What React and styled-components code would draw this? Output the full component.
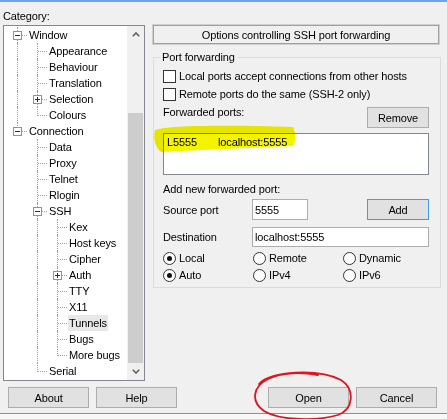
import React from "react";
import styled, { createGlobalStyle } from "styled-components";

const GlobalStyle = createGlobalStyle`
  html, body {
    margin: 0;
    padding: 0;
    background: #f0f0f0;
  }
  body {
    font-family: "Liberation Sans", Arial, sans-serif;
    font-size: 11px;
    letter-spacing: -0.12px;
    color: #000;
  }
  * {
    box-sizing: border-box;
  }
`;

const Dialog = styled.div`
  position: relative;
  width: 447px;
  height: 419px;
  background: #f0f0f0;
  display: flex;
  flex-direction: column;
  overflow: hidden;
`;

const TitleEdge = styled.div`
  height: 2px;
  flex-shrink: 0;
  background: #6ba4ec;
`;

const Main = styled.div`
  display: flex;
  gap: 8px;
  padding: 7px 0 0 3px;
`;

const LeftColumn = styled.div`
  width: 142px;
  display: flex;
  flex-direction: column;
  gap: 2px;
`;

const CategoryLabel = styled.div`
  height: 14px;
  line-height: 14px;
`;

const TreeBox = styled.div`
  height: 356px;
  display: flex;
  background: #fff;
  border: 1px solid #828790;
`;

const TreeList = styled.div`
  flex: 1;
  padding: 1px 0 0 3px;
  overflow: hidden;
`;

const TreeRow = styled.div`
  display: flex;
  height: 16px;
`;

const dots = "1px dotted #a0a0a0";

const Guide = styled.div`
  position: relative;
  width: 20px;
  flex-shrink: 0;

  &::before {
    content: "";
    position: absolute;
    left: 10px;
    top: 0;
    height: ${(p) => (p.$v === "full" ? "16px" : p.$v === "top" ? "9px" : "0")};
    border-left: ${(p) => (p.$v === "none" ? "none" : dots)};
  }

  &::after {
    content: "";
    position: absolute;
    left: 11px;
    top: 8px;
    width: ${(p) => (p.$h ? "9px" : "0")};
    border-top: ${(p) => (p.$h ? dots : "none")};
  }
`;

const Expander = styled.span`
  position: relative;
  z-index: 1;
  display: block;
  width: 9px;
  height: 9px;
  margin: 4px 0 0 6px;
  background: #fff;
  border: 1px solid #919191;

  &::before {
    content: "";
    position: absolute;
    left: 1px;
    top: 3px;
    width: 5px;
    height: 1px;
    background: #2b2b2b;
  }

  &::after {
    content: "";
    position: absolute;
    left: 3px;
    top: 1px;
    width: 1px;
    height: ${(p) => (p.$open ? "0" : "5px")};
    background: #2b2b2b;
  }
`;

const NodeLabel = styled.span`
  margin-left: 1px;
  padding: 0 1px;
  line-height: 16px;
  white-space: nowrap;
  background: ${(p) => (p.$selected ? "#e8e8e8" : "transparent")};
`;

const Scrollbar = styled.div`
  width: 17px;
  flex-shrink: 0;
  display: flex;
  flex-direction: column;
  background: #f0f0f0;
`;

const ScrollArrow = styled.div`
  height: 17px;
  display: flex;
  align-items: center;
  justify-content: center;
  color: #606060;
`;

const ScrollTrack = styled.div`
  flex: 1;
  display: flex;
  flex-direction: column;
  justify-content: flex-end;
`;

const ScrollThumb = styled.div`
  height: 250px;
  margin: 0 1px;
  background: #cdcdcd;
`;

const RightColumn = styled.div`
  width: 288px;
  margin-top: 16px;
  display: flex;
  flex-direction: column;
`;

const PanelTitle = styled.div`
  height: 19px;
  display: flex;
  align-items: center;
  justify-content: center;
  border: 1px solid #a0a0a0;
  box-shadow: 0 0 0 1px #d0d0d0;
  margin-right: 2px;
`;

const GroupBox = styled.fieldset`
  margin: 6px 0 0 0;
  padding: 0 11px 4px 9px;
  min-width: 0;
  border: 1px solid #dcdcdc;
`;

const GroupLegend = styled.legend`
  margin-left: -3px;
  padding: 0 2px;
  line-height: 14px;
`;

const CheckRow = styled.label`
  display: flex;
  align-items: center;
  gap: 3px;
  height: 16px;
  margin-top: ${(p) => p.$mt}px;
`;

const CheckBox = styled.span`
  width: 13px;
  height: 13px;
  flex-shrink: 0;
  background: #fff;
  border: 1px solid #333;
`;

const SplitRow = styled.div`
  display: flex;
  justify-content: space-between;
  align-items: flex-start;
  margin-top: 3px;
`;

const PlainLabel = styled.div`
  line-height: ${(p) => p.$lh || 14}px;
  margin-top: ${(p) => p.$mt || 0}px;
`;

const Button = styled.button`
  width: ${(p) => p.$w || 81}px;
  height: 21px;
  margin-top: ${(p) => p.$mt || 0}px;
  padding: 0;
  font: inherit;
  letter-spacing: inherit;
  color: #000;
  background: #e1e1e1;
  border: 1px solid ${(p) => (p.$focused ? "#3c9cf0" : "#adadad")};
  flex-shrink: 0;
`;

const ListBox = styled.div`
  height: 42px;
  margin-top: 5px;
  padding: 0 3px;
  background: #fff;
  border: 1px solid #828790;
`;

const ListItem = styled.div`
  display: flex;
  line-height: 14px;
  padding-top: 1px;
`;

const ListCell = styled.span`
  width: ${(p) => p.$w}px;
  white-space: nowrap;
`;

const FieldRow = styled.div`
  display: flex;
  align-items: center;
  height: ${(p) => p.$h}px;
  margin-top: ${(p) => p.$mt}px;
`;

const FieldLabel = styled.span`
  width: 89px;
  flex-shrink: 0;
`;

const TextInput = styled.div`
  width: ${(p) => (p.$w ? `${p.$w}px` : "auto")};
  flex: ${(p) => (p.$w ? "none" : "1")};
  height: 100%;
  display: flex;
  align-items: center;
  padding-left: 2px;
  background: #fff;
  border: 1px solid #abadb3;
`;

const AddButton = styled(Button)`
  margin-left: auto;
  align-self: flex-end;
`;

const RadioGrid = styled.div`
  display: grid;
  grid-template-columns: 90px 90px 1fr;
  grid-auto-rows: 16px;
  row-gap: 1px;
  margin-top: 3px;
`;

const RadioOption = styled.label`
  display: flex;
  align-items: center;
  gap: 3px;
`;

const RadioDot = styled.span`
  width: 13px;
  height: 13px;
  flex-shrink: 0;
  border-radius: 50%;
  background: #fff;
  border: 1px solid #333;
  display: flex;
  align-items: center;
  justify-content: center;

  &::after {
    content: "";
    width: 5px;
    height: 5px;
    border-radius: 50%;
    background: ${(p) => (p.$on ? "#111" : "transparent")};
  }
`;

const Footer = styled.div`
  display: flex;
  gap: 7px;
  padding: 6px 10px 0 8px;
`;

const Spacer = styled.div`
  flex: 1;
`;

const BottomEdge = styled.div`
  margin-top: auto;
  height: 6px;
  border-top: 1px solid #5a9be0;
  background: #f8f8f8;
`;

const Annotations = styled.svg`
  position: absolute;
  left: 0;
  top: 0;
  width: 447px;
  height: 419px;
  pointer-events: none;
`;

const Highlighter = styled.path`
  fill: #f4f400;
  mix-blend-mode: multiply;
`;

const PenCircle = styled.path`
  fill: none;
  stroke: #e0141e;
  stroke-width: 1.8;
  stroke-linecap: round;
`;

const treeRows = [
  { label: "Window", guides: [], v: "full", exp: "open" },
  { label: "Appearance", guides: ["full"], v: "full" },
  { label: "Behaviour", guides: ["full"], v: "full" },
  { label: "Translation", guides: ["full"], v: "full" },
  { label: "Selection", guides: ["full"], v: "full", exp: "closed" },
  { label: "Colours", guides: ["full"], v: "top" },
  { label: "Connection", guides: [], v: "top", exp: "open" },
  { label: "Data", guides: ["none"], v: "full" },
  { label: "Proxy", guides: ["none"], v: "full" },
  { label: "Telnet", guides: ["none"], v: "full" },
  { label: "Rlogin", guides: ["none"], v: "full" },
  { label: "SSH", guides: ["none"], v: "full", exp: "open" },
  { label: "Kex", guides: ["none", "full"], v: "full" },
  { label: "Host keys", guides: ["none", "full"], v: "full" },
  { label: "Cipher", guides: ["none", "full"], v: "full" },
  { label: "Auth", guides: ["none", "full"], v: "full", exp: "closed" },
  { label: "TTY", guides: ["none", "full"], v: "full" },
  { label: "X11", guides: ["none", "full"], v: "full" },
  { label: "Tunnels", guides: ["none", "full"], v: "full", selected: true },
  { label: "Bugs", guides: ["none", "full"], v: "full" },
  { label: "More bugs", guides: ["none", "full"], v: "top" },
  { label: "Serial", guides: ["none"], v: "top" },
];

const Chevron = ({ up }) => (
  <svg width="8" height="5" viewBox="0 0 8 5">
    <polyline
      points={up ? "0.8,4.2 4,1 7.2,4.2" : "0.8,0.8 4,4 7.2,0.8"}
      fill="none"
      stroke="currentColor"
      strokeWidth="1.6"
    />
  </svg>
);

const Radio = ({ on, children }) => (
  <RadioOption>
    <RadioDot $on={on} />
    {children}
  </RadioOption>
);

export default function App() {
  return (
    <>
      <GlobalStyle />
      <Dialog>
        <TitleEdge />
        <Main>
          <LeftColumn>
            <CategoryLabel>Category:</CategoryLabel>
            <TreeBox>
              <TreeList>
                {treeRows.map((row) => (
                  <TreeRow key={row.label}>
                    {row.guides.map((g, i) => (
                      <Guide key={i} $v={g} />
                    ))}
                    <Guide $v={row.v} $h>
                      {row.exp && <Expander $open={row.exp === "open"} />}
                    </Guide>
                    <NodeLabel $selected={row.selected}>{row.label}</NodeLabel>
                  </TreeRow>
                ))}
              </TreeList>
              <Scrollbar>
                <ScrollArrow>
                  <Chevron up />
                </ScrollArrow>
                <ScrollTrack>
                  <ScrollThumb />
                </ScrollTrack>
                <ScrollArrow>
                  <Chevron />
                </ScrollArrow>
              </Scrollbar>
            </TreeBox>
          </LeftColumn>

          <RightColumn>
            <PanelTitle>Options controlling SSH port forwarding</PanelTitle>
            <GroupBox>
              <GroupLegend>Port forwarding</GroupLegend>
              <CheckRow $mt={4}>
                <CheckBox />
                Local ports accept connections from other hosts
              </CheckRow>
              <CheckRow $mt={2}>
                <CheckBox />
                Remote ports do the same (SSH-2 only)
              </CheckRow>
              <SplitRow>
                <PlainLabel>Forwarded ports:</PlainLabel>
                <Button $w={62} $mt={2}>Remove</Button>
              </SplitRow>
              <ListBox>
                <ListItem>
                  <ListCell $w={51}>L5555</ListCell>
                  <ListCell>localhost:5555</ListCell>
                </ListItem>
              </ListBox>
              <PlainLabel $lh={16} $mt={6}>Add new forwarded port:</PlainLabel>
              <FieldRow $h={21} $mt={2}>
                <FieldLabel>Source port</FieldLabel>
                <TextInput $w={56}>5555</TextInput>
                <AddButton $w={62} $focused>Add</AddButton>
              </FieldRow>
              <FieldRow $h={20} $mt={7}>
                <FieldLabel>Destination</FieldLabel>
                <TextInput>localhost:5555</TextInput>
              </FieldRow>
              <RadioGrid>
                <Radio on>Local</Radio>
                <Radio>Remote</Radio>
                <Radio>Dynamic</Radio>
                <Radio on>Auto</Radio>
                <Radio>IPv4</Radio>
                <Radio>IPv6</Radio>
              </RadioGrid>
            </GroupBox>
          </RightColumn>
        </Main>

        <Footer>
          <Button>About</Button>
          <Button>Help</Button>
          <Spacer />
          <Button>Open</Button>
          <Button>Cancel</Button>
        </Footer>
        <BottomEdge />

        <Annotations viewBox="0 0 447 419">
          <Highlighter d="M155 130 C 168 125, 232 125, 293 127 C 296 134, 296 141, 293 146 C 250 148, 200 150, 161 152 C 155 147, 153 138, 155 130 Z" />
          <PenCircle d="M259 384 C 270 371, 318 368, 341 380 C 355 389, 354 409, 338 415 C 318 421, 280 421, 264 411 C 251 402, 252 387, 268 379 C 282 372, 302 372, 318 375" />
        </Annotations>
      </Dialog>
    </>
  );
}
